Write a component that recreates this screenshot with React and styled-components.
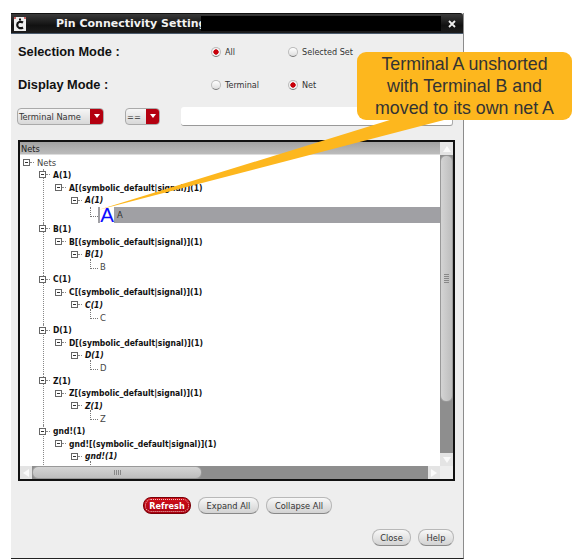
import React from 'react';
import styled, { createGlobalStyle } from 'styled-components';

const GlobalStyle = createGlobalStyle`
  html, body {
    margin: 0;
    padding: 0;
    background: #fff;
    font-family: "DejaVu Sans", sans-serif;
  }
`;

const nets = ['A', 'B', 'C', 'D', 'Z', 'gnd!'];

const uiFont = '"DejaVu Sans Condensed", "DejaVu Sans", sans-serif';

const Page = styled.div`
  position: relative;
  width: 573px;
  height: 560px;
  padding: 13px 0 0 11px;
  box-sizing: border-box;
  overflow: hidden;
`;

const Window = styled.div`
  width: 453px;
  height: 546px;
  box-sizing: border-box;
  background: #eeeeee;
  border-right: 1px solid #8c8c8c;
  border-bottom: 1px solid #222;
  display: flex;
  flex-direction: column;
`;

const TitleBar = styled.div`
  height: 21px;
  flex: none;
  display: flex;
  align-items: center;
  background: linear-gradient(#3a3a3a, #111 60%, #1c1c1c);
  border-top: 1px solid #111;
  border-bottom: 1px solid #4a5a6c;
  box-sizing: border-box;
  border-radius: 0 3px 0 0;
  padding: 0 4px 0 3px;
`;

const AppIcon = styled.svg`
  width: 12px;
  height: 14px;
  flex: none;
`;

const TitleText = styled.span`
  margin-left: 30px;
  width: 145px;
  flex: none;
  color: #f2f2f2;
  font: bold 11px "DejaVu Sans", sans-serif;
  white-space: nowrap;
`;

const Redaction = styled.div`
  flex: 1;
  height: 15px;
  background: #000;
`;

const CloseX = styled.svg`
  width: 8px;
  height: 8px;
  margin: 0 3px 0 7px;
  flex: none;
`;

const Body = styled.div`
  flex: 1;
  display: flex;
  flex-direction: column;
  padding: 1px 8px 0 6px;
`;

const ModeRow = styled.div`
  height: 33px;
  display: flex;
  align-items: center;
`;

const ModeLabel = styled.div`
  width: 194px;
  padding-left: 1px;
  box-sizing: border-box;
  font: bold 12.8px "Liberation Sans", Arial, sans-serif;
  color: #111;
  flex: none;
`;

const RadioSlot = styled.label`
  width: 77px;
  display: flex;
  align-items: center;
  gap: 4px;
  font: 9px ${uiFont};
  color: #333;
  flex: none;
  white-space: nowrap;
`;

const RadioDot = styled.span`
  width: 10px;
  height: 10px;
  box-sizing: border-box;
  border-radius: 50%;
  flex: none;
  border: 1px solid #bbb;
  border-bottom-color: #777;
  background: ${(p) => (p.$on ? 'radial-gradient(circle, #c8000a 0 42%, #f0f0f0 52%)' : 'linear-gradient(#fff, #ddd)')};
`;

const FilterRow = styled.div`
  height: 20px;
  margin-top: 5px;
  display: flex;
  align-items: center;
`;

const Combo = styled.div`
  width: ${(p) => p.$w}px;
  height: 17px;
  box-sizing: border-box;
  margin-right: ${(p) => p.$gap}px;
  flex: none;
  display: flex;
  justify-content: space-between;
  align-items: center;
  border: 1px solid #aaa;
  border-radius: 4px;
  background: linear-gradient(#f6f6f6, #d8d8d8);
  font: 9.2px ${uiFont};
  color: #333;
  padding-left: 1px;
  overflow: hidden;
`;

const ComboArrow = styled.span`
  width: 13px;
  height: 17px;
  background: #b40010;
  display: flex;
  align-items: center;
  justify-content: center;
  flex: none;
  &::after {
    content: '';
    border-left: 3.5px solid transparent;
    border-right: 3.5px solid transparent;
    border-top: 4px solid #fff;
  }
`;

const FilterInput = styled.div`
  flex: 1;
  height: 18px;
  margin-right: 2px;
  background: #fff;
  border-right: 1px solid #aaa;
  border-bottom: 1px solid #999;
  border-radius: 3px;
`;

const TreePanel = styled.div`
  margin: 14px 0 0 1px;
  height: 341px;
  box-sizing: border-box;
  border: 2px solid #111;
  background: #fff;
  display: grid;
  grid-template-columns: 1fr 13px;
  grid-template-rows: 13px 1fr 13px;
  overflow: hidden;
`;

const Header = styled.div`
  grid-column: 1;
  background: linear-gradient(#a2a2a2, #bcbcbc);
  border-bottom: 1px solid #ddd;
  box-sizing: border-box;
  font: 9.2px ${uiFont};
  color: #222;
  line-height: 13px;
  padding-left: 1px;
`;

const TreeBody = styled.div`
  grid-column: 1;
  grid-row: 2;
  overflow: hidden;
  padding-top: 1px;
`;

const NetGroup = styled.div`
  position: relative;
  &::before {
    content: '';
    position: absolute;
    left: 23px;
    top: 0;
    bottom: 0;
    border-left: 1px dotted #888;
  }
`;

const rowIndent = { 0: 3, 1: 19, 2: 35, 3: 51, 4: 70 };

const Row = styled.div`
  height: ${(p) => (p.$selected ? 16 : 12.65)}px;
  display: flex;
  align-items: center;
  position: relative;
  padding-left: ${(p) => rowIndent[p.$level]}px;
  font: ${(p) => (p.$level === 3 ? 'italic bold 8.5px' : p.$level === 4 || p.$level === 0 ? 'normal 9.4px' : 'bold 8.5px')} ${uiFont};
  color: ${(p) => (p.$level === 4 || p.$level === 0 ? '#444' : '#111')};
  white-space: nowrap;
`;

const Expander = styled.span`
  width: 7px;
  height: 7px;
  box-sizing: border-box;
  border: 1px solid #666;
  background: #fff;
  flex: none;
  margin-right: 7px;
  position: relative;
  &::after {
    content: '';
    position: absolute;
    left: 1px;
    right: 1px;
    top: 2px;
    height: 1px;
    background: #333;
  }
  &::before {
    content: '';
    position: absolute;
    left: 6px;
    top: 2px;
    width: 4px;
    border-top: 1px dotted #888;
  }
`;

const Elbow = styled.span`
  width: 8px;
  height: 10px;
  flex: none;
  margin: -6px 2px 0 0;
  border-left: 1px dotted #777;
  border-bottom: 1px dotted #777;
  box-sizing: border-box;
`;

const SelectedBar = styled.span`
  display: flex;
  align-items: center;
  flex: 1;
  height: 16px;
  margin-left: -2px;
  padding-left: 2px;
  background: #a0a0a4;
  color: #333;
`;

const BigLetter = styled.span`
  width: 14px;
  background: #fff;
  color: #0c0cff;
  font: 20.5px/16px "Liberation Sans", Arial, sans-serif;
  text-align: center;
  margin-right: 3px;
`;

const VScroll = styled.div`
  grid-column: 2;
  grid-row: 1 / 3;
  background: #8e8e8e;
  display: flex;
  flex-direction: column;
`;

const HScroll = styled.div`
  grid-column: 1;
  grid-row: 3;
  background: #8e8e8e;
  display: flex;
`;

const ScrollBtn = styled.div`
  width: ${(p) => (p.$h ? 12 : 13)}px;
  height: 13px;
  flex: none;
  background: #e4e4e4;
  display: flex;
  align-items: center;
  justify-content: center;
  &::after {
    content: '';
    ${(p) => p.$dir === 'up' && 'border: 4px solid transparent; border-top: 0; border-bottom: 6px solid #fafafa;'}
    ${(p) => p.$dir === 'down' && 'border: 4px solid transparent; border-bottom: 0; border-top: 6px solid #fafafa;'}
    ${(p) => p.$dir === 'left' && 'border: 4px solid transparent; border-left: 0; border-right: 6px solid #fafafa;'}
    ${(p) => p.$dir === 'right' && 'border: 4px solid transparent; border-right: 0; border-left: 6px solid #fafafa;'}
  }
`;

const VThumb = styled.div`
  height: 247px;
  flex: none;
  box-sizing: border-box;
  border-radius: 6px;
  border: 1px solid #999;
  background: linear-gradient(90deg, #d4d4d4, #bdbdbd);
  display: flex;
  align-items: center;
  justify-content: center;
  &::after {
    content: '';
    width: 5px;
    height: 9px;
    background: repeating-linear-gradient(#888 0 1px, transparent 1px 2px);
  }
`;

const VFill = styled.div`
  flex: 1;
`;

const HThumb = styled.div`
  width: 170px;
  flex: none;
  box-sizing: border-box;
  border-radius: 6px;
  border: 1px solid #999;
  background: linear-gradient(#d4d4d4, #bdbdbd);
  display: flex;
  align-items: center;
  justify-content: center;
  &::after {
    content: '';
    width: 7px;
    height: 5px;
    background: repeating-linear-gradient(90deg, #888 0 1px, transparent 1px 2px);
  }
`;

const HFill = styled.div`
  flex: 1;
`;

const Corner = styled.div`
  grid-column: 2;
  grid-row: 3;
  background: #eeeeee;
`;

const ActionRow = styled.div`
  margin-top: 16px;
  display: flex;
  gap: 7px;
  padding-left: 126px;
`;

const FooterRow = styled.div`
  margin-top: 15px;
  display: flex;
  justify-content: flex-end;
  gap: 7px;
  padding-right: 1px;
`;

const Button = styled.button`
  height: 17px;
  box-sizing: border-box;
  padding: 0;
  width: ${(p) => p.$w}px;
  border: 1px solid ${(p) => (p.$primary ? '#7a0008' : '#b8b8b8')};
  border-bottom-color: ${(p) => (p.$primary ? '#7a0008' : '#888')};
  border-radius: 8px;
  background: ${(p) => (p.$primary ? 'linear-gradient(#d0101a, #a80010)' : 'linear-gradient(#f8f8f8, #d2d2d2)')};
  color: ${(p) => (p.$primary ? '#fff' : '#333')};
  font: ${(p) => (p.$primary ? 'bold 9px' : 'normal 9.2px')} ${uiFont};
  ${(p) => p.$primary && 'outline: 1px dotted #f0c0c0; outline-offset: -3px;'}
`;

const Leader = styled.svg`
  position: absolute;
  left: 0;
  top: 0;
  width: 573px;
  height: 560px;
  pointer-events: none;
`;

const Callout = styled.div`
  position: absolute;
  left: 357px;
  top: 52px;
  width: 215px;
  height: 68px;
  box-sizing: border-box;
  border-radius: 9px;
  background: #fdb71e;
  color: #333;
  font: 17.8px/22px "Liberation Sans", Arial, sans-serif;
  text-align: center;
  padding-top: 1px;
  white-space: nowrap;
`;

const NetTree = ({ name, selected }) => (
  <NetGroup>
    <Row $level={1}><Expander />{name}(1)</Row>
    <Row $level={2}><Expander />{name}[(symbolic_default|signal)](1)</Row>
    <Row $level={3}><Expander />{name}(1)</Row>
    {selected ? (
      <Row $level={4} $selected>
        <Elbow />
        <SelectedBar><BigLetter>A</BigLetter>A</SelectedBar>
      </Row>
    ) : (
      <Row $level={4}><Elbow />{name === 'gnd!' ? '' : name}</Row>
    )}
  </NetGroup>
);

export default function App() {
  return (
    <Page>
      <GlobalStyle />
      <Window>
        <TitleBar>
          <AppIcon viewBox="0 0 12 14">
            <rect width="12" height="14" fill="#eee" />
            <path d="M9 5.5 C6.5 4 3.2 5 3.2 8 C3.2 11 6.5 12 9 10.5" fill="none" stroke="#111" strokeWidth="2.2" />
            <rect x="5" y="1.5" width="2" height="2" fill="#111" />
            <rect x="0" y="0" width="2" height="2" fill="#c66" />
            <rect x="10" y="0" width="2" height="2" fill="#c66" />
          </AppIcon>
          <TitleText>Pin Connectivity Setting</TitleText>
          <Redaction />
          <CloseX viewBox="0 0 8 8">
            <path d="M1 1 L7 7 M7 1 L1 7" stroke="#eee" strokeWidth="1.8" />
          </CloseX>
        </TitleBar>
        <Body>
          <ModeRow>
            <ModeLabel>Selection Mode :</ModeLabel>
            <RadioSlot><RadioDot $on />All</RadioSlot>
            <RadioSlot><RadioDot />Selected Set</RadioSlot>
          </ModeRow>
          <ModeRow>
            <ModeLabel>Display Mode :</ModeLabel>
            <RadioSlot><RadioDot />Terminal</RadioSlot>
            <RadioSlot><RadioDot $on />Net</RadioSlot>
          </ModeRow>
          <FilterRow>
            <Combo $w={87} $gap={21}>Terminal Name<ComboArrow /></Combo>
            <Combo $w={35} $gap={21}>==<ComboArrow /></Combo>
            <FilterInput />
          </FilterRow>
          <TreePanel>
            <Header>Nets</Header>
            <TreeBody>
              <Row $level={0}><Expander />Nets</Row>
              {nets.map((name, i) => (
                <NetTree key={name} name={name} selected={i === 0} />
              ))}
            </TreeBody>
            <VScroll>
              <ScrollBtn $dir="up" />
              <VThumb />
              <VFill />
              <ScrollBtn $dir="down" />
            </VScroll>
            <HScroll>
              <ScrollBtn $h $dir="left" />
              <HThumb />
              <HFill />
              <ScrollBtn $h $dir="right" />
            </HScroll>
            <Corner />
          </TreePanel>
          <ActionRow>
            <Button $primary $w={48}>Refresh</Button>
            <Button $w={61}>Expand All</Button>
            <Button $w={66}>Collapse All</Button>
          </ActionRow>
          <FooterRow>
            <Button $w={39}>Close</Button>
            <Button $w={36}>Help</Button>
          </FooterRow>
        </Body>
      </Window>
      <Leader viewBox="0 0 573 560">
        <polygon points="393,119 444,120 98,210" fill="#fdb71e" />
      </Leader>
      <Callout>
        Terminal A unshorted<br />with Terminal B and<br />moved to its own net A
      </Callout>
    </Page>
  );
}
